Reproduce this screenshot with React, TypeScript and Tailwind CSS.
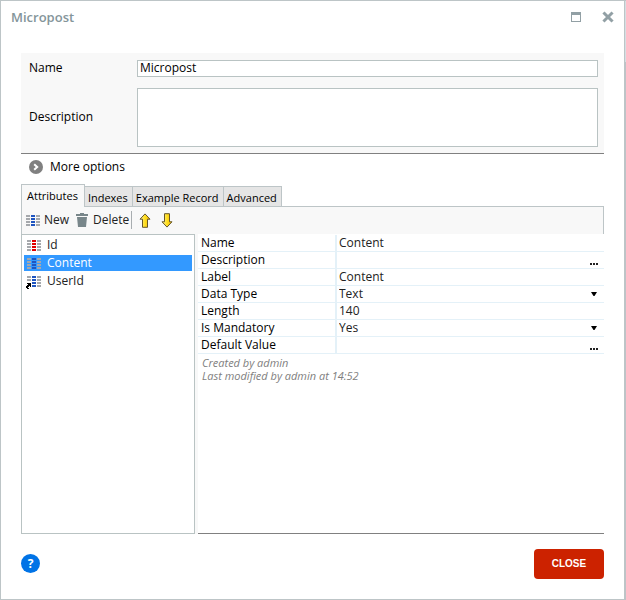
import { useState } from "react";

type Tone = "blue" | "red";

function AttributeIcon({ tone, reference = false }: { tone: Tone; reference?: boolean }) {
  const key = tone === "red" ? "#e00000" : "#1f55bf";
  return (
    <svg width="15" height="13" viewBox="0 0 15 13" className="shrink-0 overflow-visible" shapeRendering="crispEdges" aria-hidden="true">
      {[1, 4, 7, 10].map((y) => (
        <g key={y}>
          <rect x="0" y={y} width="4" height="2" fill="#a5a8ac" />
          <rect x="5" y={y} width="4" height="2" fill={key} />
          <rect x="10" y={y} width="4" height="2" fill="#a5a8ac" />
        </g>
      ))}
      {reference && (
        <g>
          <rect x="-1" y="7" width="6" height="7" fill="#fff" />
          <path d="M0 8H4V12H3V11H2V12H1V13H2V14H0V13H-1V11H0V10H1V9H0Z" fill="#000" />
        </g>
      )}
    </svg>
  );
}

function TrashIcon() {
  return (
    <svg width="12" height="14" viewBox="0 0 12 14" className="shrink-0" fill="#78868a" aria-hidden="true">
      <path d="M4 0H8V1H12V3H0V1H4ZM1 4H11L10 14H2Z" />
    </svg>
  );
}

function MoveArrow({ down = false }: { down?: boolean }) {
  return (
    <svg width="12" height="15" viewBox="0 0 12 15" className={down ? "rotate-180" : ""} aria-hidden="true">
      <defs>
        <linearGradient id={down ? "goldDown" : "goldUp"} x1="0" x2="1">
          <stop offset="0" stopColor={down ? "#f5b800" : "#fff3a0"} />
          <stop offset=".5" stopColor="#ffdf20" />
          <stop offset="1" stopColor={down ? "#fff3a0" : "#f5b800"} />
        </linearGradient>
      </defs>
      <path
        d="M6 .9L11 6.2H8.5V14.3H3.5V6.2H1Z"
        fill={down ? "url(#goldDown)" : "url(#goldUp)"}
        stroke="#66572a"
        strokeWidth="1"
      />
    </svg>
  );
}

const tabs = ["Attributes", "Indexes", "Example Record", "Advanced"];

const attributes: { name: string; tone: Tone; reference?: boolean }[] = [
  { name: "Id", tone: "red" },
  { name: "Content", tone: "blue" },
  { name: "UserId", tone: "blue", reference: true },
];

type Property = { label: string; value: string; kind: "text" | "select" | "more"; options?: string[] };

const properties: Property[] = [
  { label: "Name", value: "Content", kind: "text" },
  { label: "Description", value: "", kind: "more" },
  { label: "Label", value: "Content", kind: "text" },
  { label: "Data Type", value: "Text", kind: "select", options: ["Text", "Integer", "Boolean", "Date"] },
  { label: "Length", value: "140", kind: "text" },
  { label: "Is Mandatory", value: "Yes", kind: "select", options: ["Yes", "No"] },
  { label: "Default Value", value: "", kind: "more" },
];

function PropertyRow({ label, value, kind, options }: Property) {
  const id = "property-" + label.toLowerCase().replace(/ /g, "-");
  return (
    <tr>
      <th scope="row" className="w-[139px] border-r-2 border-b border-[#e4f1f8] p-0 pl-[3px] text-left font-normal">
        <label htmlFor={id} className="block">{label}</label>
      </th>
      <td className="border-b border-[#e4f1f8] p-0">
        <div className="relative flex h-4 items-center pl-[2px]">
          {kind === "select" ? (
            <>
              <select id={id} defaultValue={value} className="h-4 w-full appearance-none bg-transparent text-[#222] outline-none">
                {options?.map((option) => <option key={option}>{option}</option>)}
              </select>
              <svg width="6" height="4" viewBox="0 0 6 4" className="pointer-events-none absolute right-[7px]" aria-hidden="true">
                <path d="M0 0H6L3.5 4H2.5Z" />
              </svg>
            </>
          ) : (
            <input id={id} defaultValue={value} className="h-4 w-full min-w-0 bg-transparent text-[#222] outline-none" />
          )}
          {kind === "more" && (
            <button type="button" aria-label={"Edit " + label} className="flex h-4 w-5 shrink-0 items-end justify-end gap-px pr-[6px] pb-[3px]">
              <span className="size-[2px] bg-[#222]" />
              <span className="size-[2px] bg-[#222]" />
              <span className="size-[2px] bg-[#222]" />
            </button>
          )}
        </div>
      </td>
    </tr>
  );
}

export default function App() {
  const [tab, setTab] = useState("Attributes");
  const [selected, setSelected] = useState("Content");

  return (
    <div className="flex min-h-screen bg-white font-['Open_Sans','Noto_Sans',sans-serif] text-[12px] leading-4 text-black">
      <main className="flex min-w-0 flex-1 flex-col border border-[#bdc5c7] pr-5 pl-5">
        <header className="-mx-5 flex h-[52px] items-start justify-between pt-[6px] pr-[10px] pl-[10px]">
          <h1 className="text-[13px] leading-5 font-semibold text-[#84959a]">Micropost</h1>
          <div className="flex h-5 items-center gap-5">
            <button type="button" aria-label="Maximize">
              <svg width="12" height="10" viewBox="0 0 12 10" fill="none" shapeRendering="crispEdges" aria-hidden="true">
                <path d="M1.5 1V9.5H10.5V1" stroke="#92a0a5" />
                <path d="M1 0H11V3H1Z" fill="#92a0a5" />
              </svg>
            </button>
            <button type="button" aria-label="Close window">
              <svg width="12" height="12" viewBox="0 0 12 12" aria-hidden="true">
                <path d="M2.5 2.5L9.5 9.5M9.5 2.5L2.5 9.5" stroke="#92a0a5" strokeWidth="3" strokeLinecap="square" />
              </svg>
            </button>
          </div>
        </header>

        <section className="grid grid-cols-[108px_1fr] items-center gap-y-[11px] border-b border-[#808080] bg-[#f8f8f8] pt-[7px] pr-[6px] pb-[6px] pl-2">
          <label htmlFor="entity-name" className="pb-px">Name</label>
          <input id="entity-name" defaultValue="Micropost" className="h-[17px] min-w-0 border border-[#b9c3c3] bg-white px-[2px] pb-[2px] outline-none" />
          <label htmlFor="entity-description" className="pb-px">Description</label>
          <textarea id="entity-description" className="block h-[59px] min-w-0 resize-none border border-[#b9c3c3] bg-white px-[2px] outline-none" />
        </section>

        <button type="button" className="flex h-[30px] items-center gap-[7px] self-start pb-1 pl-2">
          <svg width="14" height="14" viewBox="0 0 14 14" aria-hidden="true">
            <circle cx="7" cy="7" r="7" fill="#808080" />
            <path d="M5.2 4.2L8.2 7L5.2 9.8" fill="none" stroke="#fff" strokeWidth="2" />
          </svg>
          <span>More options</span>
        </button>

        <div role="tablist" className="flex h-[22px] items-end text-[11px]">
          {tabs.map((name) => (
            <button
              key={name}
              type="button"
              role="tab"
              aria-selected={tab === name}
              onClick={() => setTab(name)}
              className={
                tab === name
                  ? "relative z-10 -mb-px h-[23px] border border-b-0 border-[#bdc5c7] bg-[#f8f8f8] pr-[6px] pl-[5px]"
                  : "h-5 border border-b-0 border-l-0 border-[#bdc5c7] bg-[#e5e5e5] pt-[3px] pr-1 pl-[3px]"
              }
            >
              {name}
            </button>
          ))}
        </div>

        <section className="flex flex-1 flex-col bg-[#f8f8f8]">
          <div className="flex h-7 items-center border-x border-t border-[#bdc5c7] pb-px pl-1 text-[#222]">
            <button type="button" className="flex items-center gap-[3px]">
              <AttributeIcon tone="blue" />
              New
            </button>
            <button type="button" className="ml-[7px] flex items-center gap-[5px]">
              <TrashIcon />
              Delete
            </button>
            <span className="ml-[2px] h-[18px] w-px bg-[#a8adb0]" />
            <button type="button" aria-label="Move up" className="ml-[7px]"><MoveArrow /></button>
            <button type="button" aria-label="Move down" className="ml-[10px]"><MoveArrow down /></button>
          </div>

          <div className="flex flex-1 gap-[3px]">
            <ul className="flex w-[174px] shrink-0 flex-col gap-[2px] border border-[#b9c3c3] bg-white px-[2px] pt-[2px]">
              {attributes.map((attribute) => (
                <li key={attribute.name} className="flex">
                  <button
                    type="button"
                    onClick={() => setSelected(attribute.name)}
                    className={
                      selected === attribute.name
                        ? "flex h-4 w-[168px] items-center gap-[5px] bg-[#3399ff] pl-[3px] text-white"
                        : "flex h-4 w-[168px] items-center gap-[5px] pl-[3px] text-[#222]"
                    }
                  >
                    <AttributeIcon tone={attribute.tone} reference={attribute.reference} />
                    {attribute.name}
                  </button>
                </li>
              ))}
            </ul>
            <div className="min-w-0 flex-1 border-b border-[#808080] bg-white pt-px">
              <table className="w-full table-fixed border-separate border-spacing-0">
                <tbody>
                  {properties.map((property) => <PropertyRow key={property.label} {...property} />)}
                </tbody>
              </table>
              <p className="px-1 pt-[2px] text-[11px] leading-[13px] text-[#808080] italic">
                Created by admin
                <br />
                Last modified by admin at 14:52
              </p>
            </div>
          </div>
        </section>

        <footer className="flex h-[65px] items-center justify-between pb-[5px]">
          <button type="button" aria-label="Help" className="mb-px flex size-[19px] items-center justify-center rounded-full bg-[#0073e6] font-bold text-white">?</button>
          <button type="button" className="h-[30px] w-[70px] rounded-[4px] bg-[#cc2200] font-['Liberation_Sans',sans-serif] text-[10px] font-bold text-white">
            CLOSE
          </button>
        </footer>
      </main>
      <div className="w-px bg-[#bdc3c7] pt-px">
        <div className="h-[61px] bg-[#d5dfe3]" />
      </div>
    </div>
  );
}
